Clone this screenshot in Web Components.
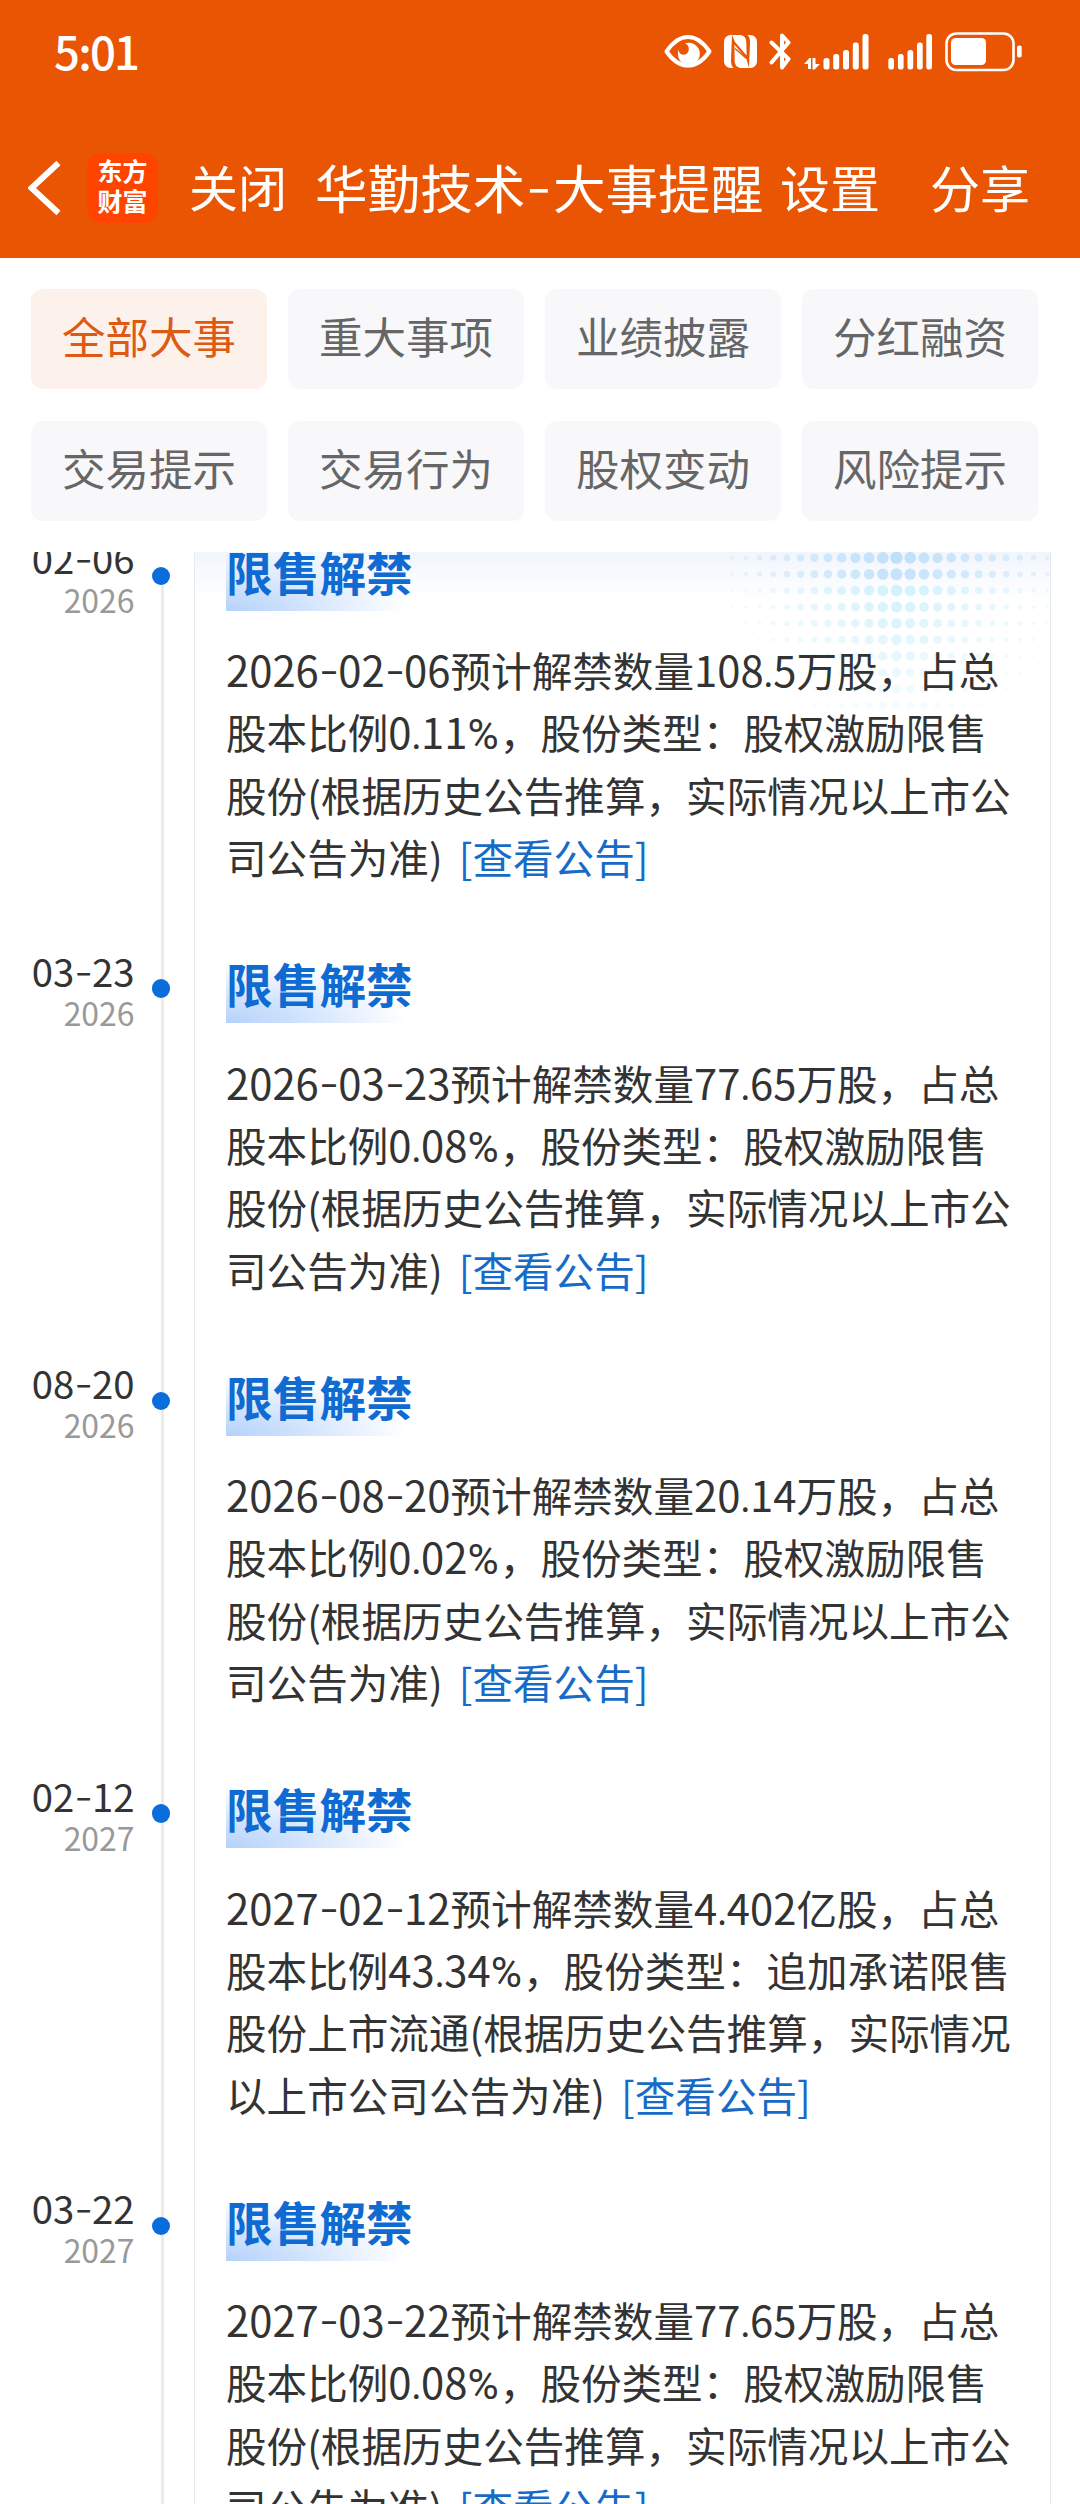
<!DOCTYPE html>
<html lang="zh-CN">
<head>
<meta charset="utf-8">
<title>华勤技术-大事提醒</title>
<style>
html,
body {
  margin: 0;
  padding: 0;
}

body {
  width: 1080px;
  height: 2504px;
  overflow: hidden;
  background: #fff;
  color: #333;
  font-family: "Noto Sans CJK SC", "Noto Sans", sans-serif;
}
</style>
</head>
<body>
<event-page></event-page>

<script>
/**
 * Creates a template element from a markup string.
 * @param {string} html markup with its styles
 */
const createTemplate = (html) => {
  const template = document.createElement('template');
  template.innerHTML = html;
  return template;
};

const latinStyles = `
.num,
.dot,
.dash,
.pct {
  line-height: 0;
}

.num {
  font-size: 1.03em;
}

.dot {
  font-size: 0.85em;
}

.dash {
  font-family: Inter, sans-serif;
  font-size: 1.12em;
  font-weight: 300;
  letter-spacing: -0.025em;
}

.pct {
  font-family: Roboto, sans-serif;
  font-size: 1.05em;
  letter-spacing: 0.025em;
}
`;

const formatLatin = (text) => text
  .replace(/\d+|-|\.|%/g, (part) => {
    const name = {'-': 'dash', '.': 'dot', '%': 'pct'}[part] || 'num';
    return `<span class="${name}">${part}</span>`;
  });

const statusTemplate = createTemplate(`
<style>
:host {
  display: flex;
  align-items: flex-start;
  box-sizing: border-box;
  height: 104px;
  padding: 32px 58px 0 54px;
  color: #fff;
}

.time {
  flex: 1;
  margin-top: -2px;
  font-size: 45.500px;
  font-weight: 500;
  line-height: 40px;
  letter-spacing: -1.800px;
}

svg {
  display: block;
  height: 40px;
  fill: #fff;
}

.eye, .nfc, .signal { margin-right: 12px; }
.bluetooth { margin-right: 12px; }
.signal-main { margin-right: 19px; }
</style>
<span class="time">5:01</span>
<svg class="eye" width="48" viewBox="664 32 48 40">
  <path d="M666.500 51.500C673 42 680 37 688 37s15 5 21.500 14.500C703 61 696 65.500 688 65.500s-15-4.500-21.500-14z" fill="none" stroke="#fff" stroke-width="4" stroke-linejoin="round"/>
  <path d="M685 43.500a11 11 0 1 1-7 8.500c0-.8 0-1.500.3-2 1 3.500 3 4.700 5.300 4.700 3.200 0 5.200-2.500 5.200-5.700 0-2.500-1.300-4.700-3.800-5.500z"/>
</svg>
<svg class="nfc" width="33" viewBox="724 32 33 40">
  <path d="M732 35h-1.500a6.500 6.500 0 0 0-6.500 6.500v20a6.500 6.500 0 0 0 6.500 6.500h3c-2-2-2.500-4-2.500-7.500z"/>
  <path d="M732 35h9c3.500 1 5 3 5.300 6.500l.3 14L735 42z"/>
  <path d="M749 68h-9c-3.500-1-5-3-5.300-6.500l-.3-17L746.500 59z"/>
  <path d="M749 68h1.500a6.500 6.500 0 0 0 6.500-6.500v-20a6.500 6.500 0 0 0-6.500-6.500h-3c2 2 2.500 4 2.500 7.500z"/>
  <path d="M735 48.500l11.500 10" stroke="#ea5504" stroke-width="1.500"/>
</svg>
<svg class="bluetooth" width="23" viewBox="769 32 23 40">
  <path d="M771.500 42.500l17 16.500-6.500 8.500v-32l6.500 7-17 20" fill="none" stroke="#fff" stroke-width="4" stroke-linejoin="round" stroke-linecap="round"/>
</svg>
<svg class="signal-main" width="65" viewBox="804 32 65 40">
  <path d="M804 64l5.500-6h1.500v11h-3v-5zM812.500 58h3v6h4.500l-5.500 5.500h-2z"/>
  <rect x="823.500" y="58" width="6" height="11.500" rx="2.500"/>
  <rect x="833.200" y="54" width="6" height="15.500" rx="2.500"/>
  <rect x="843" y="50" width="6" height="19.500" rx="2.500"/>
  <rect x="852.800" y="42.500" width="6" height="27" rx="2.500"/>
  <rect x="862.500" y="34" width="6" height="35.500" rx="2.500"/>
</svg>
<svg class="signal" width="44" viewBox="888 32 44 40">
  <rect x="888.300" y="58" width="5.700" height="11.500" rx="2.500"/>
  <rect x="897.900" y="54" width="5.700" height="15.500" rx="2.500"/>
  <rect x="907.500" y="50" width="5.700" height="19.500" rx="2.500"/>
  <rect x="917" y="42.500" width="5.700" height="27" rx="2.500"/>
  <rect x="926.300" y="34" width="5.700" height="35.500" rx="2.500"/>
</svg>
<svg width="78" viewBox="944 32 78 40">
  <rect x="946.500" y="33.500" width="67" height="36.500" rx="10" fill="none" stroke="#fff" stroke-width="2.600"/>
  <rect x="951" y="38" width="35" height="27" rx="4.500"/>
  <rect x="1017" y="45.500" width="4.700" height="12" rx="2"/>
</svg>
`);

/**
 * Phone status bar with the time and system icons.
 */
class StatusBar extends HTMLElement {
  constructor() {
    super();
    this.attachShadow({mode: 'open'});
    this.shadowRoot.append(statusTemplate.content.cloneNode(true));
  }
}

const navTemplate = createTemplate(`
<style>
:host {
  display: flex;
  align-items: center;
  box-sizing: border-box;
  height: 154px;
  padding: 14px 40px 0 28px;
  color: #fff;
  font-size: 50px;
  white-space: nowrap;
}

.back {
  display: block;
  margin-right: 25px;
}

.logo {
  display: grid;
  flex: none;
  box-sizing: border-box;
  align-content: start;
  justify-items: center;
  width: 71px;
  height: 70px;
  margin-right: 31px;
  padding-top: 2px;
  border-radius: 14px;
  background: #ff4400;
  font-size: 25px;
  font-weight: 700;
  line-height: 30px;
}

.text {
  flex: none;
  line-height: 60px;
  margin-top: -5px;
}

.close {
  width: 126px;
  font-size: 49px;
}

.title {
  width: 465px;
  font-size: 52.600px;
}

.title i {
  font-family: Inter, sans-serif;
  font-size: 1.12em;
  font-style: normal;
  font-weight: 300;
  letter-spacing: 0.015em;
  line-height: 0;
}

.settings { width: 150px; }
</style>
<svg class="back" width="34" height="58" viewBox="28 159 34 58">
  <path d="M58.500 163L31.500 188l27 25" fill="none" stroke="#fff" stroke-width="6"/>
</svg>
<div class="logo"><span>东方</span><span>财富</span></div>
<span class="text close">关闭</span>
<span class="text title">华勤技术<i>-</i>大事提醒</span>
<span class="text settings">设置</span>
<span class="text">分享</span>
`);

/**
 * App navigation bar.
 */
class NavBar extends HTMLElement {
  constructor() {
    super();
    this.attachShadow({mode: 'open'});
    this.shadowRoot.append(navTemplate.content.cloneNode(true));
  }
}

const chipTemplate = createTemplate(`
<style>
:host {
  display: flex;
  align-items: center;
  justify-content: center;
  box-sizing: border-box;
  height: 100px;
  padding-bottom: 6px;
  border-radius: 12px;
  background: #f8f8fb;
  color: #666;
  font-size: 43.500px;
  line-height: 60px;
}

:host([active]) {
  background: #fdf1eb;
  color: #dc5a12;
}
</style>
<slot></slot>
`);

/**
 * Category filter button.
 */
class FilterChip extends HTMLElement {
  constructor() {
    super();
    this.attachShadow({mode: 'open'});
    this.shadowRoot.append(chipTemplate.content.cloneNode(true));
  }
}

const eventTemplate = createTemplate(`
<style>
:host {
  display: grid;
  grid-template-columns: 134.500px 59.500px 1fr;
  height: 412.500px;
}

${latinStyles}

.date {
  text-align: right;
  white-space: nowrap;
}

.day {
  height: 40px;
  margin-top: -6.500px;
  font-size: 37.200px;
  line-height: 40px;
}

.year {
  height: 40px;
  margin-top: 2px;
  color: #999;
  font-size: 31px;
  line-height: 40px;
}

.axis {
  display: grid;
  justify-items: start;
  align-content: start;
  margin-left: 17px;
  padding-top: 22.300px;
  background: linear-gradient(#ebebeb, #ebebeb) 9.500px 0 / 3px 100% no-repeat;
}

:host([first]) .axis {
  background-position: 9.500px 32px;
}

.point {
  width: 18.600px;
  height: 18.600px;
  border-radius: 50%;
  background: #0b6cdc;
}

.card {
  padding: 0 28px 0 32px;
}

h2 {
  width: 186px;
  height: 66px;
  margin: 0 0 30px;
  background: radial-gradient(ellipse 182px 62px at 0 100%, #b5d2fb 0%, #cfe2fd 40%, rgba(255, 255, 255, 0) 100%);
  color: #0f6bd2;
  font-size: 46.700px;
  font-weight: 700;
  line-height: 52px;
  white-space: nowrap;
}

p {
  margin: -1.500px 0 0;
  font-size: 40.600px;
  line-height: 62.400px;
  white-space: nowrap;
}

a {
  margin-left: 7px;
  color: #176bc8;
}
</style>
<div class="date">
  <div class="day"></div>
  <div class="year"></div>
</div>
<div class="axis"><div class="point"></div></div>
<div class="card">
  <h2>限售解禁</h2>
  <p></p>
</div>
`);

/**
 * One dated entry of the timeline. A "|" in the text starts a new line.
 */
class TimelineEvent extends HTMLElement {
  constructor() {
    super();
    this.attachShadow({mode: 'open'});
    this.shadowRoot.append(eventTemplate.content.cloneNode(true));
  }

  connectedCallback() {
    const date = this.getAttribute('date');
    const text = this.getAttribute('text');
    const root = this.shadowRoot;

    root.querySelector('.day').innerHTML = formatLatin(date.slice(5));
    root.querySelector('.year').innerHTML = formatLatin(date.slice(0, 4));
    root.querySelector('p').innerHTML =
      formatLatin(date + text).replaceAll('|', '<br>') + ' <a>[查看公告]</a>';
  }
}

const listTemplate = createTemplate(`
<style>
:host {
  display: block;
  position: relative;
  height: 1952px;
  overflow: hidden;
}

.panel {
  position: absolute;
  inset: 0 29px 0 194px;
  border: 1px solid #e3ebef;
  border-width: 0 1px;
  background: linear-gradient(#f1f6fd, #fff 50px);
}

.panel svg {
  position: absolute;
  top: 0;
  right: 0;
}

.events {
  position: relative;
  margin-top: -7.500px;
  padding-right: 30px;
}
</style>
<div class="panel"><svg width="330" height="170"></svg></div>
<div class="events"><slot></slot></div>
`);

/**
 * Timeline panel with the halftone pattern in its top right corner.
 */
class EventTimeline extends HTMLElement {
  constructor() {
    super();
    this.attachShadow({mode: 'open'});
    this.shadowRoot.append(listTemplate.content.cloneNode(true));
    this.drawHalftone();
  }

  drawHalftone() {
    const dots = [];

    for (let row = 0; row < 10; row++) {
      for (let col = -12; col <= 11; col++) {
        const radius = 6.2 - Math.abs(col) * 0.35 - row * 0.2;
        const opacity = (1 - row / 11) * (1 - Math.abs(col) / 17);
        if (radius < 0.7) continue;
        const hue = row < 2 ? '#bfe0fa' : '#c8effb';
        dots.push(`<circle cx="${176.5 + col * 13.7}" cy="${5.8 + row * 16.4}" r="${radius}" fill="${hue}" opacity="${opacity}"/>`);
      }
    }
    this.shadowRoot.querySelector('svg').innerHTML = dots.join('');
  }
}

const pageTemplate = createTemplate(`
<style>
:host {
  display: block;
}

header {
  height: 258px;
  background: #ea5504;
}

nav {
  display: grid;
  grid-template-columns: repeat(4, 236px);
  gap: 32px 21px;
  padding: 31px;
}
</style>
<header>
  <status-bar></status-bar>
  <nav-bar></nav-bar>
</header>
<nav>
  <filter-chip active>全部大事</filter-chip>
  <filter-chip>重大事项</filter-chip>
  <filter-chip>业绩披露</filter-chip>
  <filter-chip>分红融资</filter-chip>
  <filter-chip>交易提示</filter-chip>
  <filter-chip>交易行为</filter-chip>
  <filter-chip>股权变动</filter-chip>
  <filter-chip>风险提示</filter-chip>
</nav>
<event-timeline>
  <timeline-event first date="2026-02-06" text="预计解禁数量108.5万股，占总|股本比例0.11%，股份类型：股权激励限售|股份(根据历史公告推算，实际情况以上市公|司公告为准)"></timeline-event>
  <timeline-event date="2026-03-23" text="预计解禁数量77.65万股，占总|股本比例0.08%，股份类型：股权激励限售|股份(根据历史公告推算，实际情况以上市公|司公告为准)"></timeline-event>
  <timeline-event date="2026-08-20" text="预计解禁数量20.14万股，占总|股本比例0.02%，股份类型：股权激励限售|股份(根据历史公告推算，实际情况以上市公|司公告为准)"></timeline-event>
  <timeline-event date="2027-02-12" text="预计解禁数量4.402亿股，占总|股本比例43.34%，股份类型：追加承诺限售|股份上市流通(根据历史公告推算，实际情况|以上市公司公告为准)"></timeline-event>
  <timeline-event date="2027-03-22" text="预计解禁数量77.65万股，占总|股本比例0.08%，股份类型：股权激励限售|股份(根据历史公告推算，实际情况以上市公|司公告为准)"></timeline-event>
</event-timeline>
`);

/**
 * The whole page.
 */
class EventPage extends HTMLElement {
  constructor() {
    super();
    this.attachShadow({mode: 'open'});
    this.shadowRoot.append(pageTemplate.content.cloneNode(true));
  }
}

window.customElements.define('status-bar', StatusBar);
window.customElements.define('nav-bar', NavBar);
window.customElements.define('filter-chip', FilterChip);
window.customElements.define('timeline-event', TimelineEvent);
window.customElements.define('event-timeline', EventTimeline);
window.customElements.define('event-page', EventPage);
</script>
</body>
</html>
